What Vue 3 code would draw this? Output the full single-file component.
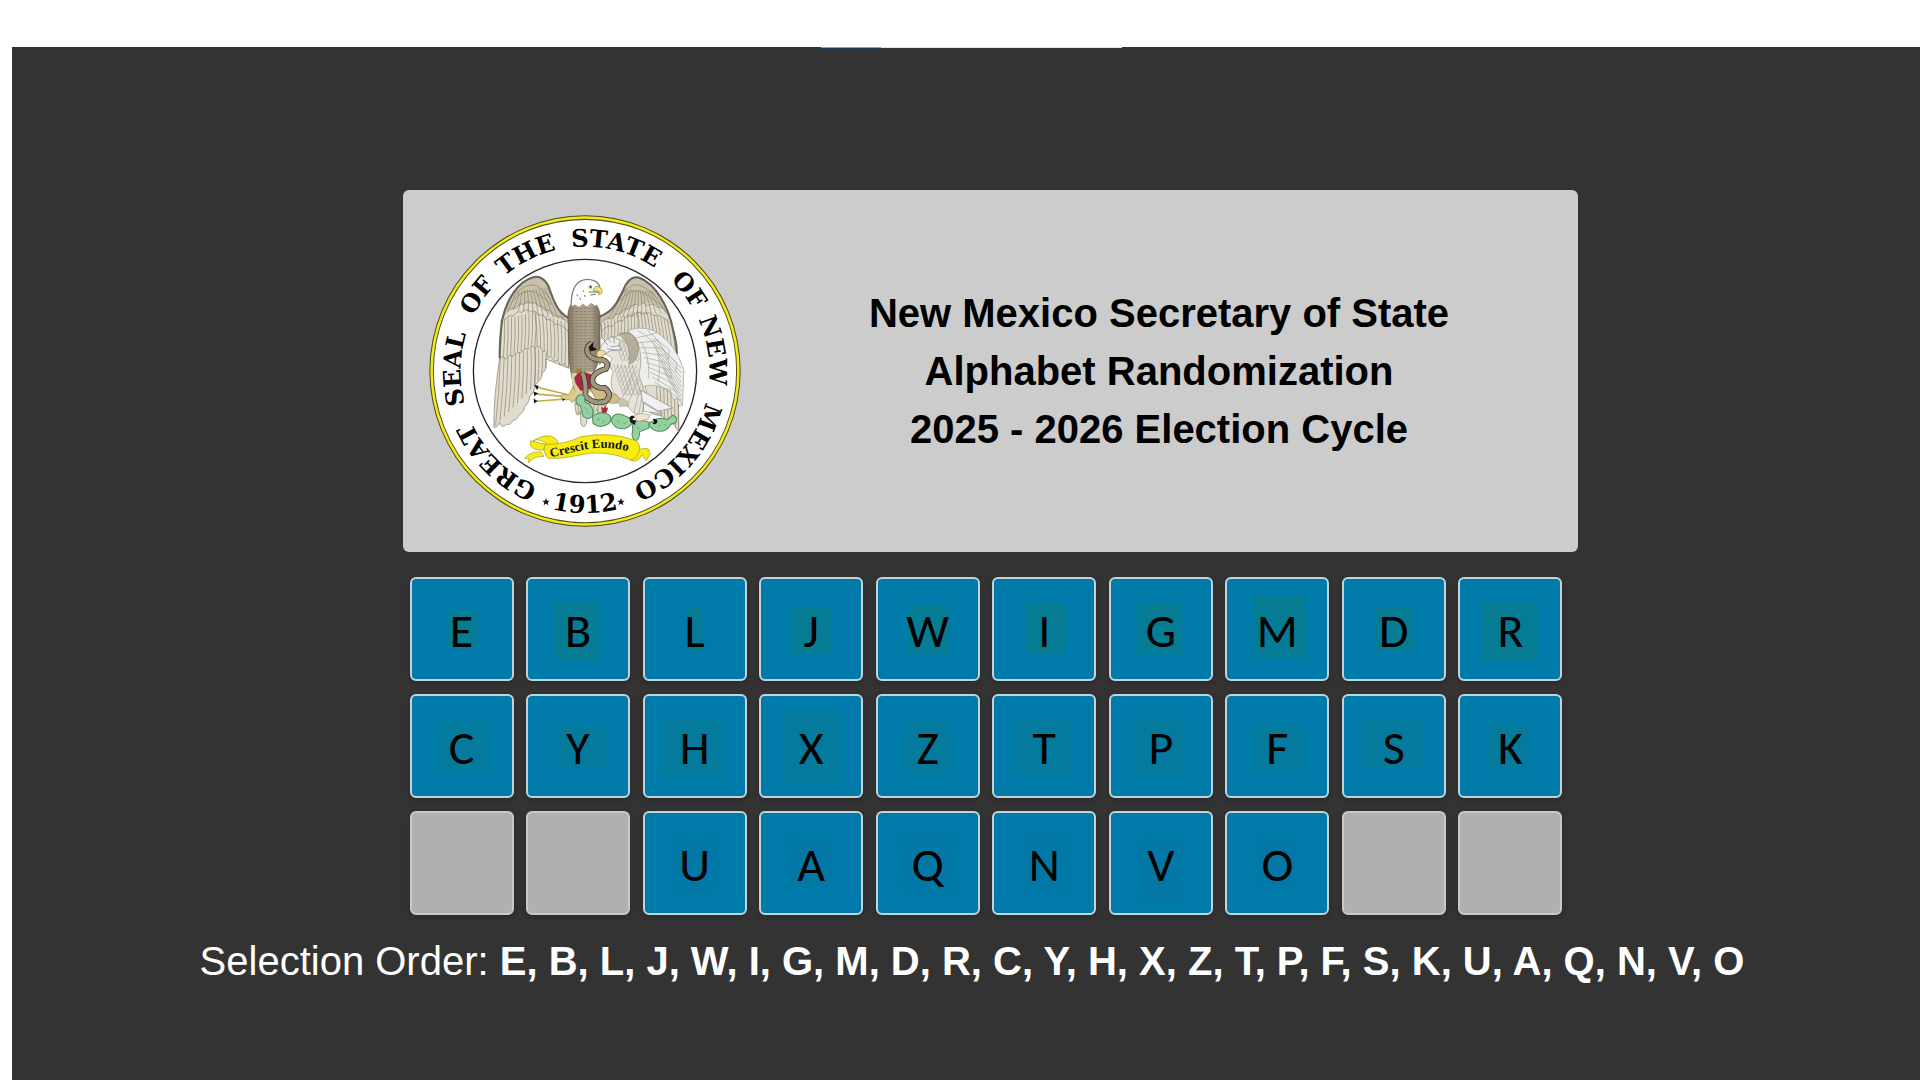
<template>
  <main class="page">
    <!-- 顶部加载条 -->
    <div class="top-strip"><span class="top-strip-done"></span></div>

    <div class="board">
      <header class="banner">
        <svg class="seal" viewBox="30 34 928 928" role="img" aria-label="Great Seal of the State of New Mexico">
          <defs>
            <path id="ring" d="M494 868 A370 370 0 0 1 494 128 A370 370 0 0 1 494 868" />
            <path id="year" d="M72 498 A422 422 0 0 0 916 498" />
            <path id="motto" d="M394 754 Q430 746 480 734 Q550 718 620 736" />
            <linearGradient id="bodyFill" x1="0" x2="1" y1="0" y2="0">
              <stop offset="0" stop-color="#7b715d" />
              <stop offset="0.25" stop-color="#a59b85" />
              <stop offset="0.7" stop-color="#aea48e" />
              <stop offset="1" stop-color="#786e5a" />
            </linearGradient>
          </defs>

          <circle cx="494" cy="498" r="463" fill="#4a4a10" />
          <circle cx="494" cy="498" r="460" fill="#f0ea20" />
          <circle cx="494" cy="498" r="451" fill="#fff" stroke="#55501a" stroke-width="3" />
          <circle cx="494" cy="498" r="332" fill="none" stroke="#26262c" stroke-width="4" />

          <text v-for="(w, i) in ringWords" :key="i" class="ring-text">
            <textPath href="#ring" :startOffset="ringOffset(w.angle)">{{ w.text }}</textPath>
          </text>
          <text class="ring-text">
            <textPath href="#year" startOffset="50%">1912</textPath>
          </text>
          <path v-for="x in [378, 601]" :key="x" :transform="`translate(${x} 887)`"
            d="M0-11 3-3 11-3 5 2 7 10 0 5-7 10-5 2-11-3-3-3Z" fill="#111" />

          <!-- 左翼 -->
          <path class="wing" d="M445 345 C412 322 402 292 390 258 C380 226 360 214 340 219 C292 232 260 290 248 345 C242 385 240 430 240 460 C230 530 222 600 223 665 Q232 670 240 650 Q244 672 262 656 Q273 660 280 645 Q292 644 298 628 Q312 622 314 605 Q328 592 330 572 Q345 560 347 538 Q366 525 366 505 Q384 495 377 462 L445 490Z" />
          <path class="wing-top" d="M445 345 C412 322 402 292 390 258 C380 226 360 214 340 219 C292 232 260 290 248 345 L262 325 Q310 290 350 300 Q380 330 445 352Z" />
          <path class="feather" :d="strokes([244, 345, 348, 322], [241, 460, 345, 425], 10)" />
          <path class="feather" :d="strokes([345, 325, 445, 356], [352, 425, 445, 488], 9)" />
          <path class="feather" :d="strokes([242, 462, 345, 427], [228, 660, 345, 540], 9)" />
          <path class="feather" :d="strokes([345, 427, 378, 445], [343, 545, 376, 490], 3)" />
          <path class="feather" d="M240 462 Q252 450 258 463 Q272 445 280 455 Q290 438 302 445 Q315 426 326 433 Q335 420 346 428 Q360 420 370 440 Q380 432 384 458 Q396 448 402 470 Q412 458 420 480 Q432 470 445 490" />
          <path class="feather" d="M262 322 Q276 306 288 312 Q300 292 312 300 Q325 286 335 296 Q348 290 356 305 Q370 302 378 318 Q394 314 404 334 Q420 330 445 356" />
          <path class="feather" d="M254 348 Q268 328 280 335 Q292 316 305 324 Q320 310 332 321 Q346 314 356 332 Q370 326 380 346 Q394 340 405 361 Q420 354 444 380" />
          <path class="feather" :d="strokes([290, 262, 380, 250], [265, 315, 430, 345], 11)" />
          <path class="feather" d="M276 292 Q310 252 342 262 Q376 282 396 302 M290 266 Q320 235 350 244 Q374 260 389 281" />
          <path class="edge" d="M445 340 C412 322 402 292 390 258 C380 226 360 214 340 219 C292 232 260 290 248 345 C242 385 240 430 240 460" />

          <!-- 右翼 -->
          <path class="wing" d="M538 340 C580 320 592 290 607 258 C620 226 636 216 654 220 C705 238 744 310 757 380 Q768 430 768 470 Q774 580 773 680 Q765 672 760 655 Q752 660 744 640 Q732 650 725 632 L690 625 L660 480 L545 400Z" />
          <path class="wing-top" d="M538 340 C580 320 592 290 607 258 C620 226 636 216 654 220 C695 234 728 280 743 330 Q700 282 646 300 Q600 330 540 355Z" />
          <path class="feather" :d="strokes([542, 356, 650, 318], [542, 402, 650, 385], 11)" />
          <path class="feather" :d="strokes([650, 318, 748, 345], [655, 385, 765, 460], 10)" />
          <path class="feather" :d="strokes([700, 455, 766, 470], [710, 630, 772, 670], 6)" />
          <path class="feather" :d="strokes([612, 255, 692, 260], [562, 345, 735, 325], 12)" />
          <path class="feather" d="M542 355 Q560 332 572 344 Q584 322 600 330 Q610 306 626 314 Q640 292 654 303 Q668 290 680 304 Q696 292 708 308 Q722 302 744 335" />
          <path class="feather" d="M542 382 Q560 358 575 366 Q590 342 606 350 Q618 328 634 336 Q650 316 666 328 Q684 318 700 333 Q720 326 750 360" />
          <path class="feather" d="M598 290 Q630 248 658 262 Q695 278 726 308 M608 266 Q635 232 660 244 Q690 258 710 284" />
          <path class="edge" d="M538 336 C580 320 592 290 607 258 C620 226 636 216 654 220 C705 238 744 310 757 380 Q768 420 767 448" />

          <!-- 尾羽 -->
          <path class="wing" d="M465 575 Q462 610 470 628 Q477 632 480 618 L482 655 Q490 672 498 655 L505 610 Q520 640 530 610 L545 640 L560 590Z" />
          <path class="feather" :d="strokes([470, 580, 545, 590], [474, 625, 540, 635], 6)" />

          <!-- 大鹰的躯干和头部 -->
          <path d="M452 300 Q490 285 528 302 Q542 320 538 352 L539 430 Q540 470 520 500 L516 560 L462 555 Q456 520 450 490 Q444 460 444 350 Q440 320 452 300Z" fill="url(#bodyFill)" stroke="#5c523e" stroke-width="2" />
          <path :d="rungs(452, 530, 312, 492, 9)" stroke="#5b523f" stroke-width="2" stroke-dasharray="9 4" opacity="0.5" />
          <path d="M453 306 Q452 250 478 232 Q500 220 522 230 Q536 236 538 250 L518 262 Q528 282 526 305 L512 296 500 306 488 298 476 308 465 300Z" fill="#fdfdfb" />
          <path d="M453 306 Q452 250 478 232 Q500 220 522 230 Q536 236 538 250" fill="none" stroke="#7c8082" stroke-width="4" />
          <path d="M526 246 Q544 246 545 262 Q542 272 534 271 L536 261 518 260Z" fill="#efe37b" stroke="#8c8238" stroke-width="2" />
          <circle cx="510" cy="248" r="6" fill="#d2c850" />
          <circle cx="511" cy="248" r="2.5" fill="#222" />
          <path d="M505 263 L535 264 M510 272 L526 270 M478 280 l4 7 M492 272 l3 6 M488 258 l3 5 M470 270 l2 6" stroke="#333" stroke-width="2" fill="none" />

          <!-- 箭与爪 -->
          <path d="M350 546 L440 568 M350 567 L440 574 M350 588 L440 581" stroke="#c6ae4e" stroke-width="5" />
          <path d="M343 540 l13 2 -4 13z M341 559 l14 5 -12 9z M341 580 l12 7 -10 8z" fill="#18181c" />
          <path d="M458 545 L475 575 Q462 585 455 592 Q450 580 438 584 L425 580 Q418 570 428 568 L446 568Z" fill="#dccb86" stroke="#9a8843" stroke-width="2" />
          <path d="M427 580 l8 2 -7 6z M470 590 l5 4 -7 4z" fill="#111" />
          <path d="M454 505 L520 500 516 560 470 572 456 530Z" fill="#d9cf9f" />
          <path d="M462 518 L478 498 512 508 514 556 496 548 482 558 466 535Z" fill="#a82640" />
          <path d="M463 500 L472 491 483 492 484 502 470 506Z" fill="#95852c" />
          <path d="M510 550 Q545 540 570 560 L605 580 Q595 600 560 592 L530 590Z" fill="#cfbe83" stroke="#8d7d46" stroke-width="2" />

          <!-- 小鹰 -->
          <path d="M625 375 Q680 360 720 392 Q765 425 788 495 L784 600 Q772 612 768 580 Q752 590 748 555 L700 540 650 545Z" fill="#eeeeec" stroke="#9a9a98" stroke-width="2" />
          <path class="feather-light" :d="strokes([645, 400, 700, 530], [705, 385, 778, 585], 9)" />
          <path class="feather-light" :d="strokes([690, 400, 730, 500], [780, 490, 782, 600], 8)" />
          <path class="feather-light" d="M650 378 Q690 395 710 440 Q720 480 712 530 M680 378 Q740 420 752 520 M700 400 l45 35 -5 30 M720 430 l48 45 -5 28 M660 410 Q685 440 684 520" />
          <path d="M545 440 Q545 400 590 394 Q630 370 650 410 Q668 460 654 510 L672 560 664 628 640 625 Q610 590 578 560 Q565 530 578 500 Q562 485 575 460Z" fill="#e6e3da" stroke="#96927f" stroke-width="2" />
          <path d="M595 388 Q645 372 653 430 Q652 470 625 478 Q634 420 595 388Z" fill="#b8b09a" stroke="#857c66" stroke-width="2" />
          <path class="feather-light" :d="scales(584, 404, 5, 5)" />
          <path class="feather-light" :d="scales(580, 480, 7, 6)" />
          <path class="feather-light" d="M600 590 L640 500 M618 605 L652 520 M640 622 L658 545 M654 626 L666 560" />
          <path d="M538 436 Q545 405 575 396 L600 408 Q588 420 602 434 L570 438 550 450Z" fill="#ededeb" stroke="#85888a" stroke-width="2" />
          <path d="M550 408 l12 12 M562 400 l10 14 M578 397 l4 18 M570 426 l25 -3 M560 432 l30 5" stroke="#76828a" stroke-width="2" />
          <path d="M530 440 Q545 432 556 442 L548 452 538 480 Q526 462 530 440Z" fill="#efe1a4" stroke="#9d8d4c" stroke-width="2" />
          <path d="M660 555 L755 608 710 618 665 592Z M668 590 L725 625 668 618Z" fill="#f0f0f0" stroke="#85858c" stroke-width="2" />
          <path d="M590 585 Q605 575 620 588 L624 602 598 604Z" fill="#c9c3b2" stroke="#8b8676" />

          <!-- 蛇 -->
          <path class="snake-line" d="M515 415 Q492 428 505 450 Q520 466 540 464 Q570 470 556 492 Q508 505 518 535 Q530 550 552 548 Q578 568 555 588 Q520 600 495 572 Q498 530 486 503" />
          <path class="snake" d="M515 415 Q492 428 505 450 Q520 466 540 464 Q570 470 556 492 Q508 505 518 535 Q530 550 552 548 Q578 568 555 588 Q520 600 495 572 Q498 530 486 503" />
          <path d="M504 428 L520 410 517 425 530 434 512 440Z" fill="#17150f" />

          <!-- 仙人掌 -->
          <g class="cactus">
            <path d="M468 578 Q478 562 492 573 L494 590 Q524 602 516 632 Q504 646 488 632 L480 602 Q464 596 468 578Z" />
            <path d="M516 635 Q535 614 565 628 Q578 642 564 655 Q538 672 518 654Z" />
            <path d="M572 645 Q578 620 605 628 L635 642 Q636 660 615 668 Q582 676 572 645Z" />
            <path d="M634 650 Q660 640 685 650 L684 668 657 678 Q655 708 642 704 Q630 695 636 675Z" />
            <path d="M684 656 Q704 632 740 642 L755 629 767 637 764 652 748 657 Q738 680 710 677 Q688 672 684 656Z" />
          </g>
          <path d="M493 605 l7 9 M500 620 l6 4 M530 640 l8 4 M545 652 l8 -5 M590 645 l8 6 M608 655 l8 -4 M650 664 l7 8 M712 665 l8 -6 M728 656 l9 4" stroke="#4e9260" stroke-width="2" />
          <path d="M546 622 L542 605 550 609 553 599 557 608 563 606 558 622Z" fill="#a62b41" />
          <path d="M640 632 Q655 618 688 630 L680 642 652 648Z" fill="#efe5cc" stroke="#9f9678" stroke-width="2" />
          <path d="M626 636 q10 -12 16 0 l-10 6 14 3 -4 14 -14 -10z M695 641 q15 -4 14 10 q-5 8 -15 4 q10 -8 1 -14z" fill="#151515" />

          <!-- 绶带 -->
          <path class="ribbon" d="M372 752 Q342 750 326 771 L327 758 314 758 Q330 738 362 738Z M378 716 L332 706 Q328 724 346 731 L370 734Z" />
          <path class="ribbon" d="M338 707 Q382 678 408 700 Q420 715 402 727 Q382 732 378 712 Q352 696 338 707Z" />
          <path class="ribbon" d="M630 748 Q662 722 683 730 L688 744 676 765 664 748 Q650 772 630 764Z" />
          <path class="ribbon" d="M376 716 Q430 718 480 694 Q570 676 645 705 Q662 720 655 735 Q646 764 628 762 Q550 730 478 748 Q430 760 385 758 Q366 738 376 716Z" />
          <text class="motto-text"><textPath href="#motto" startOffset="50%">Crescit Eundo</textPath></text>
        </svg>

        <h1 class="title">
          New Mexico Secretary of State<br>
          Alphabet Randomization<br>
          2025 - 2026 Election Cycle
        </h1>
      </header>

      <ul class="tiles">
        <li v-for="(tile, i) in tiles" :key="i" class="tile" :class="{ empty: !tile.letter }">
          <svg v-if="tile.letter" class="shade" viewBox="0 0 104 104" aria-hidden="true">
            <rect :x="tile.shade[0]" :y="tile.shade[1]" :width="tile.shade[2]" :height="tile.shade[3]"
              :fill="tile.tint" :opacity="tile.depth" />
          </svg>
          <span class="letter">{{ tile.letter }}</span>
        </li>
      </ul>
    </div>

    <p class="order">Selection Order: <strong>{{ order }}</strong></p>
  </main>
</template>

<script setup>
import { computed } from 'vue'

// 每行字母，空格代表空位
const rows = ['EBLJWIGMDR', 'CYHXZTPFSK', '  UAQNVO  ']

// 每行底纹的颜色和深浅
const tints = [
  { tint: '#0a7d80', depth: 0.5 },
  { tint: '#0a7a8c', depth: 0.4 },
  { tint: '#0a70a0', depth: 0.35 }
]

// 字母后面的底纹：x, y, 宽, 高
const shades = {
  E: [38, 34, 30, 37], B: [30, 25, 44, 57], L: [44, 31, 15, 44], J: [32, 31, 41, 46],
  W: [32, 29, 41, 48], I: [34, 27, 39, 50], G: [29, 27, 44, 50], M: [28, 18, 53, 63],
  D: [33, 31, 39, 44], R: [26, 25, 54, 59], C: [27, 28, 52, 50], Y: [31, 30, 48, 44],
  H: [18, 26, 63, 58], X: [24, 17, 59, 70], Z: [29, 28, 44, 51], T: [23, 26, 56, 53],
  P: [24, 23, 53, 56], F: [28, 31, 51, 47], S: [21, 26, 59, 48], K: [30, 29, 42, 47],
  U: [33, 27, 38, 51], A: [31, 27, 42, 47], Q: [27, 25, 51, 55], N: [32, 25, 43, 56],
  V: [32, 28, 43, 64], O: [36, 27, 35, 48]
}

const tiles = computed(() => rows.flatMap((row, r) =>
  [...row].map((c) => ({ letter: c.trim(), shade: shades[c], ...tints[r] }))
))

const order = computed(() => tiles.value.map((t) => t.letter).filter(Boolean).join(', '))

// 印章外圈文字，角度从正上方顺时针计算
const ringWords = [
  { text: 'GREAT', angle: 224 },
  { text: 'SEAL', angle: 271 },
  { text: 'OF', angle: 305 },
  { text: 'THE', angle: 333 },
  { text: 'STATE', angle: 14 },
  { text: 'OF', angle: 52 },
  { text: 'NEW', angle: 81 },
  { text: 'MEXICO', angle: 131 }
]

// 路径起点在正下方
const ringOffset = (angle) => `${((angle + 180) % 360) / 3.6}%`

// 在两条线段之间画 n 根羽毛线
const strokes = (a, b, n) => {
  let d = ''
  for (let i = 0; i <= n; i++) {
    const t = i / n
    const x1 = a[0] + (a[2] - a[0]) * t
    const y1 = a[1] + (a[3] - a[1]) * t
    const x2 = b[0] + (b[2] - b[0]) * t
    const y2 = b[1] + (b[3] - b[1]) * t
    d += `M${x1} ${y1}Q${(x1 + x2) / 2 + 4} ${(y1 + y2) / 2} ${x2} ${y2}`
  }
  return d
}

// 躯干上的横向羽纹
const rungs = (x1, x2, y1, y2, step) => {
  let d = ''
  for (let y = y1; y <= y2; y += step) d += `M${x1} ${y}H${x2}`
  return d
}

// 胸前的鳞状羽毛
const scales = (x, y, lines, cols) => {
  let d = ''
  for (let r = 0; r < lines; r++) {
    d += `M${x + r * 4} ${y + r * 13}`
    for (let c = 0; c < cols; c++) d += 'q1 12 6 12q5 0 5-12'
  }
  return d
}
</script>

<style>
body {
  margin: 0;
  background-color: #fff;
}
</style>

<style scoped>
.page {
  position: relative;
  box-sizing: border-box;
  min-height: calc(100vh - 47px);
  margin: 47px 0 0 12px;
  padding: 143px 0 40px;
  background-color: #333;
  font-family: Arial, "Liberation Sans", sans-serif;
}

.top-strip {
  position: absolute;
  top: 0;
  left: 809px;
  width: 301px;
  height: 1px;
  background-color: #e6e6e6;
}

.top-strip-done {
  display: block;
  width: 60px;
  height: 1px;
  background-color: #7ba7cc;
  box-shadow: 0 1px 0 #1c3c5c;
}

.board {
  max-width: 1175px;
  margin: 0 auto;
  padding-left: 48px;
}

/* 标题区域 */
.banner {
  display: flex;
  align-items: center;
  padding: 25px 0 25px 26px;
  border-radius: 6px;
  background-color: #ccc;
}

.seal {
  flex: none;
  display: block;
  width: 312px;
  height: 312px;
}

.title {
  flex: 1;
  margin: 0;
  color: #000;
  font-size: 40px;
  font-weight: bold;
  line-height: 58px;
  text-align: center;
}

/* 印章 */
.ring-text {
  font-family: "Palatino Linotype", Palatino, "DejaVu Serif", serif;
  font-size: 72px;
  font-weight: bold;
  text-anchor: middle;
  fill: #000;
}

.motto-text {
  font-family: "Liberation Serif", serif;
  font-size: 38px;
  font-weight: bold;
  text-anchor: middle;
  fill: #111;
}

.wing {
  fill: #e1dccd;
  stroke: #827b6a;
  stroke-width: 2;
}

.wing-top {
  fill: #c9c1ab;
}

.feather {
  fill: none;
  stroke: #8a8370;
  stroke-width: 2;
}

.feather-light {
  fill: none;
  stroke: #a5a49e;
  stroke-width: 2;
}

.edge {
  fill: none;
  stroke: #69645a;
  stroke-width: 6;
}

.snake-line {
  fill: none;
  stroke: #3c3527;
  stroke-width: 17;
}

.snake {
  fill: none;
  stroke: #a0977f;
  stroke-width: 12;
}

.cactus {
  fill: #94d0a0;
  stroke: #4f8d5d;
  stroke-width: 3;
}

.ribbon {
  fill: #f8ed12;
  stroke: #a39b18;
  stroke-width: 2;
}

/* 字母方块 */
.tiles {
  display: grid;
  grid-template-columns: repeat(10, 104px);
  justify-content: space-between;
  row-gap: 13px;
  margin: 25px 0 0;
  padding: 0 15px 0 7px;
  list-style: none;
}

.tile {
  position: relative;
  display: flex;
  align-items: center;
  justify-content: center;
  box-sizing: border-box;
  height: 104px;
  padding-top: 4px;
  border: 2px solid #c2d3da;
  border-radius: 6px;
  background-color: #007ba9;
  box-shadow: 0 2px 5px rgba(0, 0, 0, 0.2);
}

.tile.empty {
  border-color: #c8c8c8;
  background-color: #b0b0b0;
}

.shade {
  position: absolute;
  inset: -2px;
}

.letter {
  position: relative;
  color: #000;
  font-family: Calibri, Carlito, Lato, sans-serif;
  font-size: 48px;
  line-height: 48px;
}

/* 抽签顺序 */
.order {
  margin: 23px 0 0;
  padding-left: 12px;
  color: #fff;
  font-size: 40px;
  line-height: 46px;
  text-align: center;
}
</style>
